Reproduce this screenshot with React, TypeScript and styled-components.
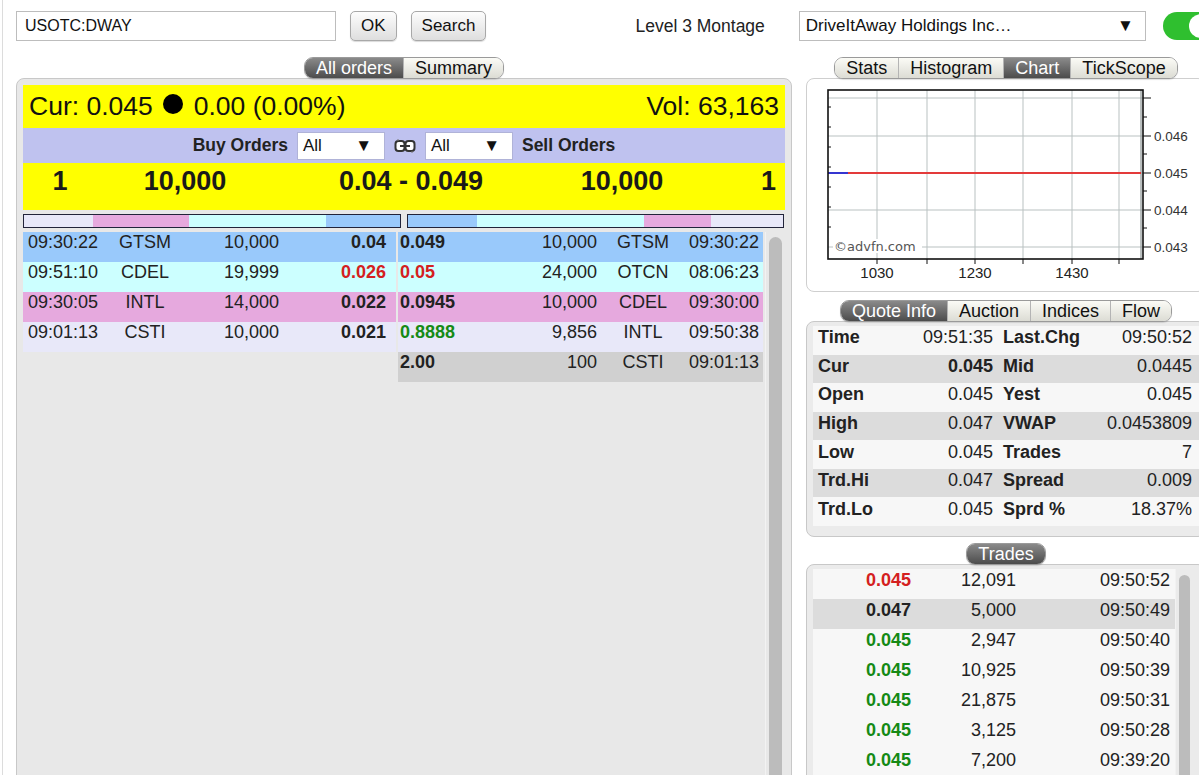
import { FC } from 'react';
import styled, { createGlobalStyle, css } from 'styled-components';

const GlobalStyle = createGlobalStyle`
  html, body {
    margin: 0;
    padding: 0;
    background: #fff;
  }
  body {
    font-family: 'Liberation Sans', Arial, sans-serif;
    color: #222;
  }
`;

const C = {
  yellow: '#ffff00',
  filter: '#bfc2ef',
  blue: '#99c9fb',
  cyan: '#ccffff',
  pink: '#e6a9de',
  lavender: '#e8e8f9',
  gray: '#d0d0d0',
  panel: '#e8e8e8',
  red: '#d42020',
  green: '#158a15',
};

type Tone = 'blue' | 'cyan' | 'pink' | 'lavender' | 'gray';
type Ink = 'red' | 'green' | undefined;

const Page = styled.div`
  width: 1197px;
  height: 775px;
  margin-left: 2px;
  border-left: 1px solid #dcdcdc;
  box-sizing: border-box;
  padding: 11px 0 0 13px;
  overflow: hidden;
`;

const TopBar = styled.div`
  display: flex;
  align-items: center;
  height: 30px;
  font-size: 17px;
  white-space: nowrap;
  & > * {
    flex: none;
  }
`;

const SymbolBox = styled.div`
  width: 320px;
  height: 30px;
  box-sizing: border-box;
  border: 1px solid #bdbdbd;
  padding: 0 8px;
  display: flex;
  align-items: center;
  font-size: 16px;
  color: #111;
`;

const Button = styled.div`
  height: 30px;
  box-sizing: border-box;
  margin-left: 14px;
  padding: 0 10px;
  display: flex;
  align-items: center;
  border: 1px solid #a8a8a8;
  border-radius: 5px;
  background: linear-gradient(#fdfdfd, #dedede);
  box-shadow: 0 1px 1px rgba(0, 0, 0, 0.15);
  color: #111;
`;

const LevelLabel = styled.div`
  margin-left: 149px;
  font-size: 17.5px;
  color: #222;
`;

const CompanySelect = styled.div`
  margin-left: 34px;
  width: 347px;
  height: 30px;
  box-sizing: border-box;
  border: 1px solid #bdbdbd;
  padding: 0 11px 0 6px;
  display: flex;
  align-items: center;
  justify-content: space-between;
  color: #111;
`;

const Toggle = styled.div`
  margin-left: 17px;
  width: 52px;
  height: 28px;
  border-radius: 14px;
  background: #2fbf2f;
  display: flex;
  align-items: center;
  justify-content: flex-end;
  padding: 0 2px;
  box-sizing: border-box;
`;

const Knob = styled.div`
  width: 24px;
  height: 24px;
  border-radius: 50%;
  background: #fff;
`;

const Main = styled.div`
  display: flex;
  align-items: flex-start;
  gap: 14px;
  margin-top: 16px;
`;

const LeftCol = styled.div`
  width: 776px;
  flex: none;
  display: flex;
  flex-direction: column;
  align-items: center;
`;

const RightCol = styled.div`
  width: 400px;
  flex: none;
  display: flex;
  flex-direction: column;
  align-items: center;
`;

const TabGroup = styled.div<{ $mt?: number }>`
  display: inline-flex;
  position: relative;
  z-index: 1;
  margin-top: ${({ $mt }) => $mt ?? 0}px;
  margin-bottom: -1px;
  border: 1px solid #9a9a9a;
  border-radius: 9px;
  overflow: hidden;
  box-shadow: 0 1px 1px rgba(0, 0, 0, 0.12);
`;

const Tab = styled.div<{ $active?: boolean }>`
  height: 20px;
  line-height: 20px;
  padding: 0 11px;
  font-size: 18px;
  color: #111;
  background: linear-gradient(#fbfbf6, #dcdcd4);
  & + & {
    border-left: 1px solid #b4b4b4;
  }
  ${({ $active }) =>
    $active &&
    css`
      color: #fff;
      background: linear-gradient(#8a8a8a, #4c4c4c);
    `}
`;

const OrdersPanel = styled.div`
  width: 776px;
  height: 720px;
  box-sizing: border-box;
  border: 1px solid #c8c8c8;
  border-radius: 8px;
  background: ${C.panel};
  padding: 6px;
`;

const CurRow = styled.div`
  height: 43px;
  background: ${C.yellow};
  display: flex;
  align-items: center;
  justify-content: space-between;
  padding: 0 6px 0 6px;
  font-size: 26.5px;
  color: #111;
`;

const Dot = styled.span`
  display: inline-block;
  width: 20px;
  height: 20px;
  border-radius: 50%;
  background: #000;
  margin: 0 11px 0 10px;
  vertical-align: 1px;
`;

const FilterRow = styled.div`
  height: 35px;
  background: ${C.filter};
  display: flex;
  align-items: center;
  justify-content: center;
  gap: 9px;
  font-size: 17.5px;
  font-weight: bold;
  color: #222;
`;

const FilterSelect = styled.div`
  width: 88px;
  height: 28px;
  box-sizing: border-box;
  background: #fff;
  border: 1px solid #b0b3d8;
  padding: 0 12px 0 5px;
  display: flex;
  align-items: center;
  justify-content: space-between;
  font-size: 17px;
  font-weight: normal;
  color: #111;
`;

const BestRow = styled.div`
  height: 47px;
  box-sizing: border-box;
  padding-bottom: 10px;
  background: ${C.yellow};
  display: grid;
  grid-template-columns: 74px 176px 276px 146px 1fr;
  align-items: center;
  font-size: 27px;
  font-weight: bold;
  color: #1a1a1a;
`;

const BestCell = styled.div<{ $right?: boolean }>`
  text-align: ${({ $right }) => ($right ? 'right' : 'center')};
  padding-right: ${({ $right }) => ($right ? '9px' : '0')};
`;

const BarsRow = styled.div`
  margin-top: 4px;
  display: grid;
  grid-template-columns: 378px 377px;
  column-gap: 6px;
  height: 14px;
`;

const DepthBar = styled.div`
  display: flex;
  border: 1px solid #22243a;
  box-sizing: border-box;
  height: 14px;
`;

const DepthSeg = styled.div<{ $tone: Tone; $grow: number }>`
  flex: ${({ $grow }) => $grow} 1 0;
  background: ${({ $tone }) => C[$tone]};
`;

const OrdersBody = styled.div`
  margin-top: 4px;
  display: grid;
  grid-template-columns: 373px 365px 1fr;
  column-gap: 2px;
  height: 580px;
`;

const OrderList = styled.div`
  display: flex;
  flex-direction: column;
`;

const rowBase = css`
  display: grid;
  align-items: center;
  height: 30px;
  box-sizing: border-box;
  padding-bottom: 9px;
  font-size: 18px;
  color: #222;
`;

const BuyRow = styled.div<{ $tone: Tone }>`
  ${rowBase};
  grid-template-columns: 72px 90px 89px 1fr;
  padding-left: 5px;
  padding-right: 10px;
  background: ${({ $tone }) => C[$tone]};
`;

const SellRow = styled.div<{ $tone: Tone }>`
  ${rowBase};
  grid-template-columns: 120px 77px 92px 1fr;
  padding-left: 2px;
  padding-right: 5px;
  background: ${({ $tone }) => C[$tone]};
`;

const Cell = styled.div<{ $align?: 'left' | 'center' | 'right'; $bold?: boolean; $ink?: Ink }>`
  text-align: ${({ $align }) => $align ?? 'left'};
  font-weight: ${({ $bold }) => ($bold ? 'bold' : 'normal')};
  color: ${({ $ink }) => ($ink ? C[$ink] : 'inherit')};
  white-space: nowrap;
`;

const ScrollTrack = styled.div<{ $top: number }>`
  border-left: 1px solid #f2f2f2;
  padding: ${({ $top }) => $top}px 0 0 3px;
`;

const ScrollThumb = styled.div<{ $w: number }>`
  width: ${({ $w }) => $w}px;
  height: 100%;
  border-radius: 7px 7px 0 0;
  background: #bcbcbc;
`;

const ChartPanel = styled.div`
  width: 400px;
  height: 214px;
  box-sizing: border-box;
  border: 1px solid #cfcfcf;
  border-radius: 8px;
  background: #fff;
  padding: 8px 0 0 14px;
`;

const QuotePanel = styled.div`
  width: 400px;
  height: 216px;
  box-sizing: border-box;
  border: 1px solid #c8c8c8;
  border-radius: 8px;
  background: #ebebeb;
  padding: 4px 6px 0 6px;
`;

const QuoteRow = styled.div<{ $dark?: boolean }>`
  display: grid;
  grid-template-columns: 87px 93px 110px 1fr;
  align-items: center;
  height: 28.57px;
  box-sizing: border-box;
  padding-bottom: 5px;
  font-size: 18px;
  color: #222;
  background: ${({ $dark }) => ($dark ? '#dcdcdc' : '#f7f7f7')};
`;

const QLabel = styled.div<{ $second?: boolean }>`
  font-weight: bold;
  padding-left: ${({ $second }) => ($second ? '10px' : '5px')};
  white-space: nowrap;
`;

const QValue = styled.div<{ $bold?: boolean; $last?: boolean }>`
  text-align: right;
  font-weight: ${({ $bold }) => ($bold ? 'bold' : 'normal')};
  padding-right: ${({ $last }) => ($last ? '7px' : '0')};
`;

const TradesPanel = styled.div`
  width: 400px;
  height: 240px;
  box-sizing: border-box;
  border: 1px solid #c8c8c8;
  border-radius: 8px;
  background: #ebebeb;
  padding: 4px 0 0 6px;
  display: grid;
  grid-template-columns: 362px 1fr;
`;

const TradeRow = styled.div<{ $dark?: boolean }>`
  display: grid;
  grid-template-columns: 98px 105px 1fr;
  align-items: center;
  height: 30px;
  box-sizing: border-box;
  padding: 0 5px 8px 0;
  font-size: 18px;
  color: #222;
  background: ${({ $dark }) => ($dark ? '#dcdcdc' : '#f7f7f7')};
`;

const LinkIcon: FC = () => (
  <svg width="22" height="18" viewBox="0 0 22 18">
    <rect x="1.5" y="4" width="9" height="10" rx="3" fill="#fff" stroke="#333" strokeWidth="2" />
    <rect x="11.5" y="4" width="9" height="10" rx="3" fill="#fff" stroke="#333" strokeWidth="2" />
    <line x1="6" y1="9" x2="16" y2="9" stroke="#333" strokeWidth="2" />
    <line x1="4" y1="2" x2="4" y2="4" stroke="#777" strokeWidth="1" />
    <line x1="18" y1="14" x2="18" y2="16" stroke="#777" strokeWidth="1" />
  </svg>
);

const vGrid = [56, 106, 154, 202, 251, 298];
const hGrid = [11, 49, 86, 123, 160];

const PriceChart: FC = () => (
  <svg width="372" height="200" viewBox="0 0 372 200" fontFamily="'Liberation Sans', Arial, sans-serif">
    <rect x="7" y="3" width="315" height="169" fill="#fff" />
    {vGrid.map((x) => (
      <line key={`v${x}`} x1={x} y1="3" x2={x} y2="172" stroke="#b9c1c1" strokeWidth="1" />
    ))}
    {hGrid.map((y) => (
      <line key={`h${y}`} x1="7" y1={y} x2="322" y2={y} stroke="#b9c1c1" strokeWidth="1" />
    ))}
    <line x1="320" y1="3" x2="320" y2="172" stroke="#8c9494" strokeWidth="1.2" />
    <line x1="27" y1="86" x2="320" y2="86" stroke="#e33a3a" strokeWidth="2" />
    <line x1="7" y1="86" x2="27" y2="86" stroke="#3535d0" strokeWidth="2" />
    <rect x="12" y="152" width="89" height="14" fill="#fff" />
    <text x="13" y="164" fontSize="13" fill="#555" fontFamily="'DejaVu Sans', sans-serif">
      ©advfn.com
    </text>
    <rect x="7" y="3" width="315" height="169" fill="none" stroke="#111" strokeWidth="1.6" />
    {[11, 30, 49, 67, 86, 104, 123, 141, 160].map((y, i) => (
      <line key={`r${y}`} x1="322" y1={y} x2={i % 2 === 0 ? 330 : 326} y2={y} stroke="#111" strokeWidth="1" />
    ))}
    {[20, 40, 60, 80, 100, 120, 140].map((y) => (
      <line key={`l${y}`} x1="7" y1={y} x2="10" y2={y} stroke="#111" strokeWidth="1" />
    ))}
    {vGrid.map((x) => (
      <line key={`b${x}`} x1={x} y1="172" x2={x} y2="177" stroke="#111" strokeWidth="1" />
    ))}
    {[
      ['0.046', 54],
      ['0.045', 91],
      ['0.044', 128],
      ['0.043', 165],
    ].map(([t, y]) => (
      <text key={t as string} x="333" y={y as number} fontSize="13.5" fill="#333">
        {t}
      </text>
    ))}
    {[
      ['1030', 56],
      ['1230', 154],
      ['1430', 251],
    ].map(([t, x]) => (
      <text key={t as string} x={x as number} y="191" fontSize="15" fill="#222" textAnchor="middle">
        {t}
      </text>
    ))}
  </svg>
);

const buyOrders: { time: string; mm: string; size: string; price: string; tone: Tone; ink?: Ink }[] = [
  { time: '09:30:22', mm: 'GTSM', size: '10,000', price: '0.04', tone: 'blue' },
  { time: '09:51:10', mm: 'CDEL', size: '19,999', price: '0.026', tone: 'cyan', ink: 'red' },
  { time: '09:30:05', mm: 'INTL', size: '14,000', price: '0.022', tone: 'pink' },
  { time: '09:01:13', mm: 'CSTI', size: '10,000', price: '0.021', tone: 'lavender' },
];

const sellOrders: { time: string; mm: string; size: string; price: string; tone: Tone; ink?: Ink }[] = [
  { price: '0.049', size: '10,000', mm: 'GTSM', time: '09:30:22', tone: 'blue' },
  { price: '0.05', size: '24,000', mm: 'OTCN', time: '08:06:23', tone: 'cyan', ink: 'red' },
  { price: '0.0945', size: '10,000', mm: 'CDEL', time: '09:30:00', tone: 'pink' },
  { price: '0.8888', size: '9,856', mm: 'INTL', time: '09:50:38', tone: 'lavender', ink: 'green' },
  { price: '2.00', size: '100', mm: 'CSTI', time: '09:01:13', tone: 'gray' },
];

const buyDepth: [Tone, number][] = [
  ['lavender', 69],
  ['pink', 97],
  ['cyan', 138],
  ['blue', 74],
];

const sellDepth: [Tone, number][] = [
  ['blue', 69],
  ['cyan', 168],
  ['pink', 68],
  ['lavender', 72],
];

const quoteRows = [
  ['Time', '09:51:35', 'Last.Chg', '09:50:52'],
  ['Cur', '0.045', 'Mid', '0.0445'],
  ['Open', '0.045', 'Yest', '0.045'],
  ['High', '0.047', 'VWAP', '0.0453809'],
  ['Low', '0.045', 'Trades', '7'],
  ['Trd.Hi', '0.047', 'Spread', '0.009'],
  ['Trd.Lo', '0.045', 'Sprd %', '18.37%'],
];

const trades: { price: string; size: string; time: string; ink?: Ink }[] = [
  { price: '0.045', size: '12,091', time: '09:50:52', ink: 'red' },
  { price: '0.047', size: '5,000', time: '09:50:49' },
  { price: '0.045', size: '2,947', time: '09:50:40', ink: 'green' },
  { price: '0.045', size: '10,925', time: '09:50:39', ink: 'green' },
  { price: '0.045', size: '21,875', time: '09:50:31', ink: 'green' },
  { price: '0.045', size: '3,125', time: '09:50:28', ink: 'green' },
  { price: '0.045', size: '7,200', time: '09:39:20', ink: 'green' },
];

const App: FC = () => {
  return (
    <>
      <GlobalStyle />
      <Page>
        <TopBar>
          <SymbolBox>USOTC:DWAY</SymbolBox>
          <Button>OK</Button>
          <Button>Search</Button>
          <LevelLabel>Level 3 Montage</LevelLabel>
          <CompanySelect>
            <span>DriveItAway Holdings Inc…</span>
            <span>▼</span>
          </CompanySelect>
          <Toggle>
            <Knob />
          </Toggle>
        </TopBar>

        <Main>
          <LeftCol>
            <TabGroup>
              <Tab $active>All orders</Tab>
              <Tab>Summary</Tab>
            </TabGroup>
            <OrdersPanel>
              <CurRow>
                <span>
                  Cur: 0.045
                  <Dot />
                  0.00 (0.00%)
                </span>
                <span>Vol: 63,163</span>
              </CurRow>
              <FilterRow>
                <span>Buy Orders</span>
                <FilterSelect>
                  <span>All</span>
                  <span>▼</span>
                </FilterSelect>
                <LinkIcon />
                <FilterSelect>
                  <span>All</span>
                  <span>▼</span>
                </FilterSelect>
                <span>Sell Orders</span>
              </FilterRow>
              <BestRow>
                <BestCell>1</BestCell>
                <BestCell>10,000</BestCell>
                <BestCell>0.04 - 0.049</BestCell>
                <BestCell>10,000</BestCell>
                <BestCell $right>1</BestCell>
              </BestRow>
              <BarsRow>
                <DepthBar>
                  {buyDepth.map(([tone, w], i) => (
                    <DepthSeg key={i} $tone={tone} $grow={w} />
                  ))}
                </DepthBar>
                <DepthBar>
                  {sellDepth.map(([tone, w], i) => (
                    <DepthSeg key={i} $tone={tone} $grow={w} />
                  ))}
                </DepthBar>
              </BarsRow>
              <OrdersBody>
                <OrderList>
                  {buyOrders.map((o) => (
                    <BuyRow key={o.time + o.mm} $tone={o.tone}>
                      <Cell>{o.time}</Cell>
                      <Cell $align="center">{o.mm}</Cell>
                      <Cell $align="right">{o.size}</Cell>
                      <Cell $align="right" $bold $ink={o.ink}>
                        {o.price}
                      </Cell>
                    </BuyRow>
                  ))}
                </OrderList>
                <OrderList>
                  {sellOrders.map((o) => (
                    <SellRow key={o.time + o.mm} $tone={o.tone}>
                      <Cell $bold $ink={o.ink}>
                        {o.price}
                      </Cell>
                      <Cell $align="right">{o.size}</Cell>
                      <Cell $align="center">{o.mm}</Cell>
                      <Cell $align="right">{o.time}</Cell>
                    </SellRow>
                  ))}
                </OrderList>
                <ScrollTrack $top={5}>
                  <ScrollThumb $w={13} />
                </ScrollTrack>
              </OrdersBody>
            </OrdersPanel>
          </LeftCol>

          <RightCol>
            <TabGroup>
              <Tab>Stats</Tab>
              <Tab>Histogram</Tab>
              <Tab $active>Chart</Tab>
              <Tab>TickScope</Tab>
            </TabGroup>
            <ChartPanel>
              <PriceChart />
            </ChartPanel>

            <TabGroup $mt={8}>
              <Tab $active>Quote Info</Tab>
              <Tab>Auction</Tab>
              <Tab>Indices</Tab>
              <Tab>Flow</Tab>
            </TabGroup>
            <QuotePanel>
              {quoteRows.map(([l1, v1, l2, v2], i) => (
                <QuoteRow key={l1} $dark={i % 2 === 1}>
                  <QLabel>{l1}</QLabel>
                  <QValue $bold={l1 === 'Cur'}>{v1}</QValue>
                  <QLabel $second>{l2}</QLabel>
                  <QValue $last>{v2}</QValue>
                </QuoteRow>
              ))}
            </QuotePanel>

            <TabGroup $mt={6}>
              <Tab $active>Trades</Tab>
            </TabGroup>
            <TradesPanel>
              <OrderList>
                {trades.map((t, i) => (
                  <TradeRow key={t.time} $dark={i === 1}>
                    <Cell $align="right" $bold $ink={t.ink}>
                      {t.price}
                    </Cell>
                    <Cell $align="right">{t.size}</Cell>
                    <Cell $align="right">{t.time}</Cell>
                  </TradeRow>
                ))}
              </OrderList>
              <ScrollTrack $top={6}>
                <ScrollThumb $w={11} />
              </ScrollTrack>
            </TradesPanel>
          </RightCol>
        </Main>
      </Page>
    </>
  );
};

export default App;
